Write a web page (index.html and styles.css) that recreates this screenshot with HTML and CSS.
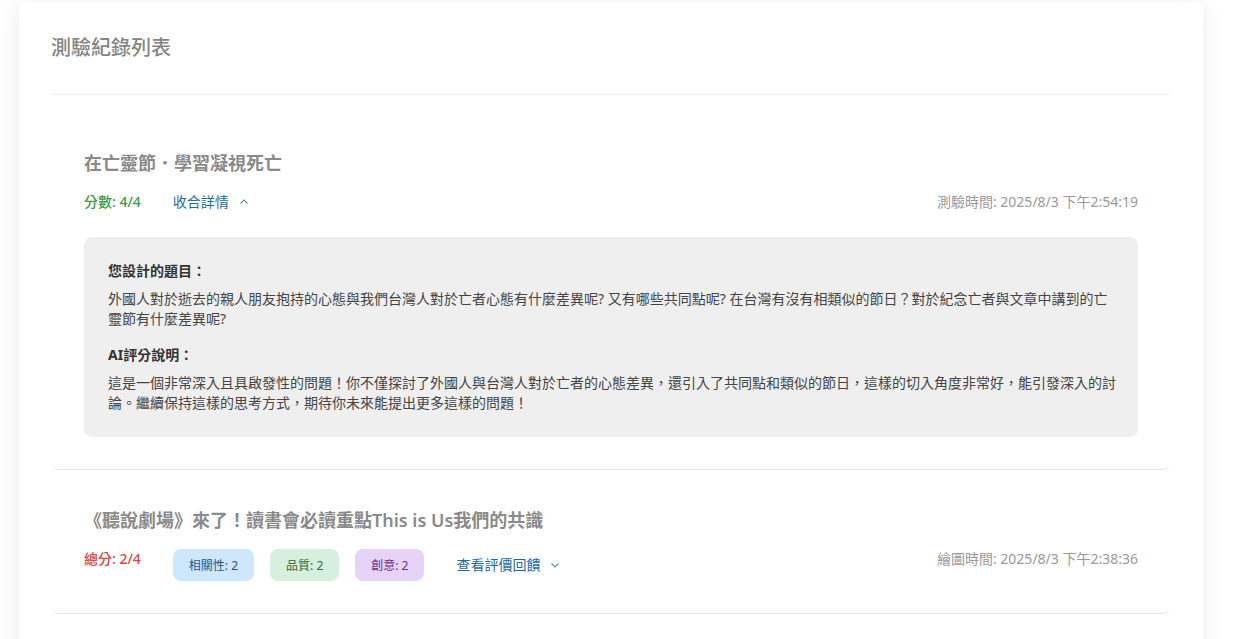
FILE: index.html
```html
<!DOCTYPE html>
<html lang="zh-Hant">
<head>
<meta charset="utf-8">
<title>測驗紀錄列表</title>
<link rel="stylesheet" href="styles.css">
</head>
<body>
<div class="card">
  <div class="card-header">
    <h1 class="page-title">測驗紀錄列表</h1>
  </div>
  <div class="list">
    <div class="item">
      <h2 class="item-title">在亡靈節．學習凝視死亡</h2>
      <div class="row">
        <div class="row-left">
          <span class="score score-good">分數: 4/4</span>
          <a class="toggle">收合詳情
            <svg class="chev" width="10" height="10" viewBox="0 0 10 10"><path d="M1.5 6.5 L5 3 L8.5 6.5" fill="none" stroke="#5b8db8" stroke-width="1.1"/></svg>
          </a>
        </div>
        <span class="date">測驗時間: 2025/8/3 下午2:54:19</span>
      </div>
      <div class="detail">
        <h3 class="detail-head">您設計的題目：</h3>
        <p class="detail-text">外國人對於逝去的親人朋友抱持的心態與我們台灣人對於亡者心態有什麼差異呢? 又有哪些共同點呢? 在台灣有沒有相類似的節日？對於紀念亡者與文章中講到的亡靈節有什麼差異呢?</p>
        <h3 class="detail-head second">AI評分說明：</h3>
        <p class="detail-text">這是一個非常深入且具啟發性的問題！你不僅探討了外國人與台灣人對於亡者的心態差異，還引入了共同點和類似的節日，這樣的切入角度非常好，能引發深入的討論。繼續保持這樣的思考方式，期待你未來能提出更多這樣的問題！</p>
      </div>
    </div>
    <div class="item">
      <h2 class="item-title">《聽說劇場》來了！讀書會必讀重點This is Us我們的共識</h2>
      <div class="row">
        <div class="row-left">
          <span class="score score-bad">總分: 2/4</span>
          <div class="badges">
            <span class="badge badge-blue">相關性: 2</span>
            <span class="badge badge-green">品質: 2</span>
            <span class="badge badge-purple">創意: 2</span>
          </div>
          <a class="toggle">查看評價回饋
            <svg class="chev" width="10" height="10" viewBox="0 0 10 10"><path d="M1.5 3.5 L5 7 L8.5 3.5" fill="none" stroke="#5b8db8" stroke-width="1.1"/></svg>
          </a>
        </div>
        <span class="date">繪圖時間: 2025/8/3 下午2:38:36</span>
      </div>
    </div>
  </div>
</div>
</body>
</html>
```
FILE: styles.css
```css
* { box-sizing: border-box; }
html, body { margin: 0; background: #ffffff; }
body {
  padding: 2px 0 0 19px;
  font-family: "Noto Sans", "Noto Sans CJK TC", sans-serif;
  height: 639px;
  overflow: hidden;
}
.card {
  width: 1184px;
  min-height: 700px;
  background: #fff;
  border-radius: 8px;
  box-shadow: 0 4px 22px rgba(0,0,0,0.09);
  padding: 0 33px;
}
.card-header {
  padding: 32px 0;
  border-bottom: 1px solid #f0f0f0;
}
.page-title {
  margin: 0 0 0 -1px;
  font-size: 20px;
  line-height: 28px;
  font-weight: 500;
  color: #858585;
}
.list { padding-top: 18px; }
.item {
  padding: 38px 32px 32px;
  border-bottom: 1px solid #e6e6e6;
  border-radius: 8px;
}
.item-title {
  margin: 0 0 17px;
  font-size: 18px;
  line-height: 24px;
  font-weight: 600;
  color: #8a8a8a;
}
.row {
  display: flex;
  justify-content: space-between;
  align-items: flex-start;
}
.row-left {
  display: flex;
  align-items: flex-start;
  gap: 32px;
}
.score {
  font-size: 14px;
  line-height: 20px;
  font-weight: 500;
}
.score-good { color: #3f9a45; }
.score-bad { color: #d9463b; }
.toggle {
  align-self: center;
  display: flex;
  align-items: center;
  font-size: 14px;
  line-height: 20px;
  color: #1f6aa8;
  cursor: pointer;
}
.chev { margin-left: 10px; }
.date {
  font-size: 14px;
  line-height: 20px;
  color: #999999;
}
.badges {
  display: flex;
  gap: 16px;
}
.badge {
  display: flex;
  align-items: center;
  height: 32px;
  padding: 0 16px;
  border-radius: 8px;
  font-size: 12px;
}
.badge-blue { background: #cfe7fc; color: #23557f; }
.badge-green { background: #d6efdf; color: #2f6a3a; }
.badge-purple { background: #e7d3f8; color: #6a2c8c; }
.detail {
  margin-top: 25px;
  background: #efefef;
  border-radius: 8px;
  padding: 24px 20px 24px 24px;
}
.detail-head {
  margin: 0;
  font-size: 14px;
  line-height: 20px;
  font-weight: 700;
  color: #333;
}
.detail-head.second { margin-top: 16px; }
.detail-text {
  margin: 8px 0 0;
  font-size: 14px;
  line-height: 20px;
  color: #444;
}
```
